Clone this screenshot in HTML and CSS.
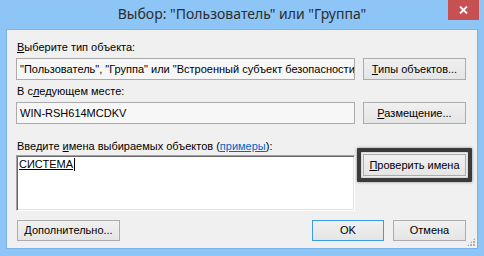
FILE: index.html
```html
<!DOCTYPE html>
<html lang="ru">
<head>
<meta charset="utf-8">
<title>Выбор: "Пользователь" или "Группа"</title>
<link rel="stylesheet" href="styles.css">
</head>
<body>
<div class="window">
  <header class="titlebar">
    <span class="spacer"></span>
    <h1 class="title">Выбор: "Пользователь" или "Группа"</h1>
    <div class="close-wrap">
      <button class="close" aria-label="Закрыть">
        <svg width="9" height="8" viewBox="0 0 9 8"><path d="M1 0.5 L8 7.5 M8 0.5 L1 7.5" stroke="#fff" stroke-width="1.8" fill="none"/></svg>
      </button>
    </div>
  </header>
  <main class="client">
    <div class="label"><u>В</u>ыберите тип объекта:</div>
    <div class="row">
      <div class="field">"Пользователь", "Группа" или "Встроенный субъект безопасности"</div>
      <button class="btn"><u>Т</u>ипы объектов...</button>
    </div>
    <div class="label label-2">В с<u>л</u>едующем месте:</div>
    <div class="row">
      <div class="field">WIN-RSH614MCDKV</div>
      <button class="btn"><u>Р</u>азмещение...</button>
    </div>
    <div class="label label-3">Введите <u>и</u>мена выбираемых объектов (<a class="link" href="#">примеры</a>):</div>
    <div class="row row-names">
      <div class="names"><span class="resolved">СИСТЕМА</span><span class="caret"></span></div>
      <div class="check-wrap">
        <button class="btn btn-check"><u>П</u>роверить имена</button>
        <span class="highlight"></span>
      </div>
    </div>
    <div class="bottom">
      <button class="btn btn-more"><u>Д</u>ополнительно...</button>
      <div class="actions">
        <button class="btn btn-ok">OK</button>
        <button class="btn btn-cancel">Отмена</button>
      </div>
    </div>
    <span class="grip"></span>
  </main>
</div>
</body>
</html>
```

FILE: styles.css
```css
* { box-sizing: border-box; }
html, body { margin: 0; padding: 0; }
body {
  width: 484px;
  height: 256px;
  overflow: hidden;
  background: #8CC5F6;
}
.window {
  width: 484px;
  height: 256px;
  background: #8CC5F6;
  display: flex;
  flex-direction: column;
}
.titlebar {
  height: 29px;
  display: grid;
  grid-template-columns: 1fr auto 1fr;
}
.title {
  margin: 0;
  font-family: "Noto Sans", "Open Sans", sans-serif;
  font-weight: normal;
  font-size: 14px;
  line-height: 29px;
  color: #2d2d2d;
  white-space: nowrap;
  padding-top: 0;
  margin-top: -1px;
}
.close-wrap {
  display: flex;
  justify-content: flex-end;
  align-items: flex-start;
  padding-right: 5px;
}
.close {
  width: 31px;
  height: 20px;
  border: 0;
  padding: 0;
  margin: 0;
  background: #C75050;
  display: flex;
  align-items: center;
  justify-content: center;
}
.client {
  position: relative;
  margin: 0 6px;
  height: 220px;
  background: #F0F0F0;
  border: 1px solid #7CB3E6;
  padding: 11px 11px 0 9px;
  font-family: "Liberation Sans", Arial, sans-serif;
  font-size: 11px;
  color: #000;
  display: flex;
  flex-direction: column;
}
.label {
  height: 13px;
  line-height: 13px;
  padding-left: 1px;
  white-space: nowrap;
  margin-bottom: 4px;
}
.label-2 { margin-top: 5px; }
.label-3 { margin-top: 16px; margin-bottom: 2px; }
.label u, .btn u { text-decoration: underline; }
.link { color: #0066CC; text-decoration: underline; }
.row {
  display: flex;
  gap: 8px;
  height: 22px;
}
.field {
  width: 339px;
  height: 22px;
  background: #F7F7F7;
  border: 1px solid #ABABAB;
  line-height: 20px;
  padding-left: 3px;
  white-space: nowrap;
  overflow: hidden;
}
.btn {
  width: 103px;
  height: 22px;
  margin: 0;
  padding: 0;
  border: 1px solid #ACACAC;
  background: linear-gradient(#F0F0F0, #E5E5E5);
  font-family: "Liberation Sans", Arial, sans-serif;
  font-size: 11px;
  color: #000;
  text-align: center;
  line-height: 20px;
}
.row-names {
  height: 56px;
}
.names {
  width: 339px;
  height: 56px;
  background: #fff;
  border-top: 1px solid #A0A0A0;
  border-left: 1px solid #A0A0A0;
  border-right: 1px solid #fff;
  border-bottom: 1px solid #fff;
  box-shadow: inset 1px 1px 0 #696969, inset -1px -1px 0 #E3E3E3;
  padding: 2px 2px;
  line-height: 13px;
  white-space: nowrap;
}
.resolved { text-decoration: underline; }
.caret {
  display: inline-block;
  width: 1px;
  height: 13px;
  background: #000;
  vertical-align: top;
  margin-left: 1px;
}
.check-wrap {
  position: relative;
  width: 103px;
  height: 22px;
  margin-top: -1px;
}
.highlight {
  position: absolute;
  left: -6px;
  top: -6px;
  right: -6px;
  bottom: -6px;
  border: 4px solid #3A3A3A;
  border-radius: 1px;
  box-shadow: 0 0 3px rgba(0,0,0,0.45), inset 0 0 2px rgba(0,0,0,0.35);
}
.bottom {
  margin-top: 9px;
  display: flex;
  justify-content: space-between;
  height: 21px;
}
.bottom .btn { height: 21px; line-height: 19px; }
.btn-more { margin-left: 1px; width: 103px; }
.actions { display: flex; gap: 9px; }
.btn-ok { width: 72px; border-color: #3C9CE6; }
.btn-cancel { width: 73px; }
.grip {
  position: absolute;
  right: 2px;
  bottom: 2px;
  width: 8px;
  height: 8px;
  background:
    radial-gradient(circle at 1px 1px, #B0B0B0 1px, transparent 1.2px) 0 0 / 3px 3px;
  clip-path: polygon(100% 0, 100% 100%, 0 100%);
}
```
